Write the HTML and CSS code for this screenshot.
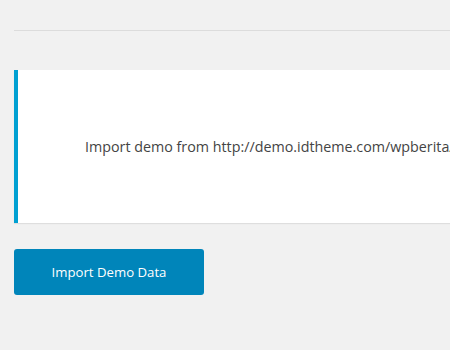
FILE: index.html
```html
<!DOCTYPE html>
<html lang="en">
<head>
    <meta charset="UTF-8">
    <meta name="viewport" content="width=device-width, initial-scale=1.0">
    <title>Import Demo Data</title>
    <link rel="stylesheet" href="styles.css">
</head>
<body>
    <div class="wrap">
        <hr class="divider">
        <div class="notice">
            <p class="notice-text">Import demo from http://demo.idtheme.com/wpberita/</p>
        </div>
        <button class="import-button">Import Demo Data</button>
    </div>
</body>
</html>
```

FILE: styles.css
```css
body {
    font-family: "Open Sans", "Noto Sans", sans-serif;
    background-color: #f1f1f1;
    margin: 0;
    padding: 0;
    overflow: hidden;
}

.wrap {
    padding: 30px 0 0 14px;
}

.divider {
    border: none;
    border-top: 1px solid #dcdcdc;
    margin: 0;
}

.notice {
    margin-top: 39px;
    height: 153px;
    background-color: #ffffff;
    border-left: 4px solid #00a0d2;
    box-shadow: 0 1px 1px rgba(0, 0, 0, 0.08);
    display: flex;
    align-items: center;
    padding-left: 67px;
    white-space: nowrap;
}

.notice-text {
    margin: 0;
    font-size: 14.3px;
    color: #444444;
}

.import-button {
    margin-top: 26px;
    width: 190px;
    height: 46px;
    background-color: #0085ba;
    color: #ffffff;
    border: none;
    border-radius: 3px;
    font-family: "Open Sans", "Noto Sans", sans-serif;
    font-size: 13.2px;
    cursor: pointer;
}
```
